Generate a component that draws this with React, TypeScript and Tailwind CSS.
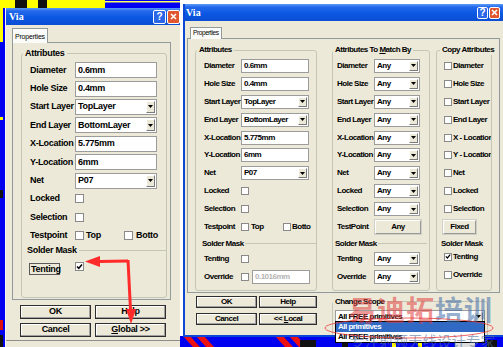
import React from "react";

const FONT = "font-['Liberation_Sans',Arial,sans-serif]";
const LT = "font-bold text-[9px] leading-[11px] tracking-[-0.3px] text-black whitespace-nowrap";
const RT = "font-bold text-[8px] leading-[10px] tracking-[-0.5px] text-black whitespace-nowrap";

function Check({ checked = false, s = "w-[9px] h-[9px]" }: { checked?: boolean; s?: string }) {
  return (
    <span className={`inline-flex shrink-0 items-center justify-center bg-white border border-[#8a8a8a] ${s}`}>
      {checked && (
        <svg width="7" height="7" viewBox="0 0 7 7">
          <path d="M1 3.4 L2.8 5.3 L6 1.4" stroke="#000" strokeWidth="1.5" fill="none" />
        </svg>
      )}
    </span>
  );
}

function TextBox({ v, w, h, t, disabled = false }: { v: string; w: string; h: string; t: string; disabled?: boolean }) {
  return (
    <div className={`flex items-center shrink-0 bg-white border border-[#9c9c9c] pl-[2px] overflow-hidden ${w} ${h}`}>
      <span className={`${t} ${disabled ? "!text-[#b4b4b4]" : ""}`}>{v}</span>
    </div>
  );
}

function Combo({ v, w, h, t }: { v: string; w: string; h: string; t: string }) {
  return (
    <div className={`flex items-stretch shrink-0 bg-white border border-[#9c9c9c] ${w} ${h}`}>
      <span className={`flex-1 flex items-center pl-[2px] overflow-hidden ${t}`}>{v}</span>
      <span className="w-[9px] m-[1px] flex items-center justify-center bg-[#ece9d8] border border-t-white border-l-white border-r-[#7a7a7a] border-b-[#7a7a7a]">
        <svg width="5" height="3" viewBox="0 0 5 3">
          <path d="M0 0H5L2.5 3Z" fill="#000" />
        </svg>
      </span>
    </div>
  );
}

function Btn({ children, cls, t }: { children: React.ReactNode; cls: string; t: string }) {
  return (
    <div className={`flex items-center justify-center bg-[#ece9d8] border border-[#2e2e2e] shadow-[inset_-1px_-1px_0_#a0a0a0,inset_1px_1px_0_#ffffff] ${cls}`}>
      <span className={t}>{children}</span>
    </div>
  );
}

function SoftBtn({ children, cls, t }: { children: React.ReactNode; cls: string; t: string }) {
  return (
    <div className={`flex items-center justify-center shrink-0 bg-[#ece9d8] border border-t-[#ffffff] border-l-[#ffffff] border-r-[#9a9a9a] border-b-[#9a9a9a] shadow-[0_0_0_1px_#cfcfc4] ${cls}`}>
      <span className={t}>{children}</span>
    </div>
  );
}

function TitleBar({ left }: { left: boolean }) {
  return (
    <div
      className={`flex items-center h-[17px] shrink-0 bg-[linear-gradient(to_bottom,#5a9cf8_0%,#2468ea_18%,#0b58e3_55%,#0a4ed3_100%)] ${
        left ? "pl-[3px] pr-0" : "pl-[1px] pr-[5px]"
      }`}
    >
      <span className="font-['Liberation_Serif',serif] font-bold text-[10px] text-white leading-none">Via</span>
      <div className="ml-auto flex gap-[1px]">
        <div
          className={`flex items-center justify-center rounded-[2px] border border-white bg-[#2a66e8] ${
            left ? "w-[13px] h-[14px]" : "w-[11px] h-[12px]"
          }`}
        >
          <span className="text-white font-bold text-[10px] leading-none">?</span>
        </div>
        <div
          className={`flex items-center justify-center rounded-[2px] border border-white bg-[#e0562e] ${
            left ? "w-[13px] h-[14px]" : "w-[11px] h-[12px]"
          }`}
        >
          <svg width="7" height="7" viewBox="0 0 7 7">
            <path d="M1 1L6 6M6 1L1 6" stroke="#fff" strokeWidth="1.6" />
          </svg>
        </div>
      </div>
    </div>
  );
}

function LRow({ label, children }: { label: string; children?: React.ReactNode }) {
  return (
    <div className="flex items-center h-[18.4px]">
      <span className={`w-[45px] shrink-0 ${LT}`}>{label}</span>
      {children}
    </div>
  );
}

function RRow({ label, lw, children }: { label: string; lw: string; children?: React.ReactNode }) {
  return (
    <div className="flex items-center h-[17.9px] overflow-hidden">
      <span className={`${lw} shrink-0 ${RT}`}>{label}</span>
      {children}
    </div>
  );
}

function CRow({ label, checked = false }: { label: string; checked?: boolean }) {
  return (
    <div className="flex items-center h-[17.9px] overflow-hidden">
      <Check checked={checked} s="w-[8px] h-[8px]" />
      <span className={`ml-[1px] ${RT}`}>{label}</span>
    </div>
  );
}

function LeftWindow() {
  const tb = (v: string) => <TextBox v={v} w="w-[82px]" h="h-[16px]" t={LT} />;
  const cb = (v: string) => <Combo v={v} w="w-[82px]" h="h-[16px]" t={LT} />;
  return (
    <div className="absolute left-[5px] top-[8px] w-[175px] h-[339px] flex flex-col bg-[#ece9d8] border-l border-[#f6f6f6] overflow-hidden">
      <TitleBar left />
      <div className="flex flex-col pl-[6px]">
        <div className="flex mt-[3px]">
          <div className="relative z-10 -mb-px h-[15px] px-[2px] flex items-center bg-[#fbfbf9] border border-b-0 border-[#919b9c] text-[7px] leading-none tracking-[-0.2px] text-black">
            Properties
          </div>
        </div>
        <div className="w-[159px] border border-[#919b9c] pb-[1px]">
          <fieldset className="ml-[8px] mr-[3px] mt-[5px] border border-[#c6c6b6] rounded-[3px] min-w-0">
            <legend className={`ml-[1px] px-[2px] ${LT}`}>Attributes</legend>
            <div className="flex flex-col pt-[2px] pl-[8px] pb-[22px]">
              <LRow label="Diameter">{tb("0.6mm")}</LRow>
              <LRow label="Hole Size">{tb("0.4mm")}</LRow>
              <LRow label="Start Layer">{cb("TopLayer")}</LRow>
              <LRow label="End Layer">{cb("BottomLayer")}</LRow>
              <LRow label="X-Location">{tb("5.775mm")}</LRow>
              <LRow label="Y-Location">{tb("6mm")}</LRow>
              <LRow label="Net">{cb("P07")}</LRow>
              <LRow label="Locked">
                <Check />
              </LRow>
              <LRow label="Selection">
                <Check />
              </LRow>
              <LRow label="Testpoint">
                <Check />
                <span className={`ml-[2px] w-[38px] ${LT}`}>Top</span>
                <Check />
                <span className={`ml-[3px] ${LT}`}>Botto</span>
              </LRow>
              <div className="flex items-center h-[12px] -ml-[3px]">
                <span className={LT}>Solder Mask</span>
                <span className="flex-1 ml-[2px] border-t border-[#c6c6b6]" />
              </div>
              <div className="flex items-center h-[16px] mt-[2px]">
                <div className="w-[45px] shrink-0">
                  <span className={`-ml-[1px] inline-flex items-center h-[12px] w-[31px] px-[1px] border border-[#5a5a5a] ${LT}`}>
                    Tenting
                  </span>
                </div>
                <Check checked />
              </div>
            </div>
          </fieldset>
        </div>
        <div className="grid grid-cols-[71px_71px] gap-x-[4px] gap-y-[4px] mt-[5px] pl-[8px]">
          <Btn cls="h-[14px]" t={LT}>OK</Btn>
          <Btn cls="h-[14px]" t={LT}>Help</Btn>
          <Btn cls="h-[14px]" t={LT}>Cancel</Btn>
          <Btn cls="h-[14px]" t={LT}>
            <span className="underline">G</span>lobal &gt;&gt;
          </Btn>
        </div>
      </div>
      <div className="mt-auto mb-[6px] border-t border-[#8e8e8e]" />
    </div>
  );
}

function RightWindow() {
  const tb = (v: string) => <TextBox v={v} w="w-[68px]" h="h-[14px]" t={RT} />;
  const cb = (v: string) => <Combo v={v} w="w-[68px]" h="h-[14px]" t={RT} />;
  const any = () => <Combo v="Any" w="w-[46px]" h="h-[14px]" t={RT} />;
  return (
    <div className="absolute left-[183px] top-[4px] w-[322px] h-[333px] flex flex-col bg-[#ece9d8] border-l-2 border-b-2 border-[#0b48d6] overflow-hidden">
      <TitleBar left={false} />
      <div className="flex flex-col pl-[2px]">
        <div className="flex mt-[6px] ml-[3px]">
          <div className="relative z-10 -mb-px h-[12px] px-[2px] flex items-center bg-[#fbfbf9] border border-b-0 border-[#919b9c] text-[6.5px] leading-none tracking-[-0.4px] text-black">
            Properties
          </div>
        </div>
        <div className="w-[313px] border border-[#919b9c] pb-[1px] flex items-stretch">
          {/* Attributes */}
          <fieldset className="ml-[7px] mt-[6px] w-[122px] border border-[#c6c6b6] rounded-[3px] min-w-0">
            <legend className={`ml-[1px] px-[2px] ${RT}`}>Attributes</legend>
            <div className="flex flex-col pt-[2px] pl-[8px] pb-[5px]">
              <RRow label="Diameter" lw="w-[37px]">{tb("0.6mm")}</RRow>
              <RRow label="Hole Size" lw="w-[37px]">{tb("0.4mm")}</RRow>
              <RRow label="Start Layer" lw="w-[37px]">{cb("TopLayer")}</RRow>
              <RRow label="End Layer" lw="w-[37px]">{cb("BottomLayer")}</RRow>
              <RRow label="X-Location" lw="w-[37px]">{tb("5.775mm")}</RRow>
              <RRow label="Y-Location" lw="w-[37px]">{tb("6mm")}</RRow>
              <RRow label="Net" lw="w-[37px]">{cb("P07")}</RRow>
              <RRow label="Locked" lw="w-[37px]">
                <Check s="w-[8px] h-[8px]" />
              </RRow>
              <RRow label="Selection" lw="w-[37px]">
                <Check s="w-[8px] h-[8px]" />
              </RRow>
              <RRow label="Testpoint" lw="w-[37px]">
                <Check s="w-[8px] h-[8px]" />
                <span className={`ml-[2px] w-[32px] ${RT}`}>Top</span>
                <Check s="w-[8px] h-[8px]" />
                <span className={`ml-[1px] ${RT}`}>Botto</span>
              </RRow>
              <div className="flex items-center h-[12px] mt-[2px] -ml-[2px]">
                <span className={RT}>Solder Mask</span>
                <span className="flex-1 ml-[1px] border-t border-[#c6c6b6]" />
              </div>
              <div className="flex items-center h-[16px] mt-[1px]">
                <span className={`w-[37px] shrink-0 ${RT}`}>Tenting</span>
                <Check s="w-[8px] h-[8px]" />
              </div>
              <div className="flex items-center h-[16px] mt-[2px]">
                <span className={`w-[37px] shrink-0 ${RT}`}>Override</span>
                <Check s="w-[8px] h-[8px]" />
                <div className="ml-[3px]">
                  <TextBox v="0.1016mm" w="w-[58px]" h="h-[14px]" t={RT} disabled />
                </div>
              </div>
            </div>
          </fieldset>
          {/* Attributes To Match By */}
          <fieldset className="ml-[15px] mt-[6px] w-[98px] border border-[#c6c6b6] rounded-[3px] min-w-0">
            <legend className={`px-[2px] ${RT}`}>
              Attributes To <span className="underline">M</span>atch By
            </legend>
            <div className="flex flex-col pt-[2px] pl-[4px] pb-[5px]">
              <RRow label="Diameter" lw="w-[37px]">{any()}</RRow>
              <RRow label="Hole Size" lw="w-[37px]">{any()}</RRow>
              <RRow label="Start Layer" lw="w-[37px]">{any()}</RRow>
              <RRow label="End Layer" lw="w-[37px]">{any()}</RRow>
              <RRow label="X-Location" lw="w-[37px]">{any()}</RRow>
              <RRow label="Y-Location" lw="w-[37px]">{any()}</RRow>
              <RRow label="Net" lw="w-[37px]">{any()}</RRow>
              <RRow label="Locked" lw="w-[37px]">{any()}</RRow>
              <RRow label="Selection" lw="w-[37px]">{any()}</RRow>
              <RRow label="TestPoint" lw="w-[37px]">
                <SoftBtn cls="ml-[1px] w-[46px] h-[14px]" t={RT}>
                  Any
                </SoftBtn>
              </RRow>
              <div className="flex items-center h-[12px] mt-[2px] -ml-[2px] mr-[2px]">
                <span className={RT}>Solder Mask</span>
                <span className="flex-1 ml-[1px] border-t border-[#c6c6b6]" />
              </div>
              <div className="flex items-center h-[16px] mt-[1px]">
                <span className={`w-[37px] shrink-0 ${RT}`}>Tenting</span>
                {any()}
              </div>
              <div className="flex items-center h-[16px] mt-[2px]">
                <span className={`w-[37px] shrink-0 ${RT}`}>Override</span>
                {any()}
              </div>
            </div>
          </fieldset>
          {/* Copy Attributes */}
          <fieldset className="ml-[6px] mt-[6px] w-[56px] border border-[#c6c6b6] rounded-[3px] min-w-0">
            <legend className={`ml-[3px] px-[2px] ${RT}`}>Copy Attributes</legend>
            <div className="flex flex-col pt-[2px] pl-[7px] pb-[5px]">
              <CRow label="Diameter" />
              <CRow label="Hole Size" />
              <CRow label="Start Layer" />
              <CRow label="End Layer" />
              <CRow label="X - Location" />
              <CRow label="Y - Location" />
              <CRow label="Net" />
              <CRow label="Locked" />
              <CRow label="Selection" />
              <div className="flex items-center h-[17.9px]">
                <SoftBtn cls="-ml-[1px] w-[33px] h-[14px]" t={RT}>
                  Fixed
                </SoftBtn>
              </div>
              <div className="flex items-center h-[12px] mt-[2px] -ml-[3px] overflow-hidden">
                <span className={RT}>Solder Mask</span>
              </div>
              <div className="flex items-center h-[16px] -mt-[1px] overflow-hidden">
                <Check checked s="w-[8px] h-[8px]" />
                <span className={`ml-[1px] ${RT}`}>Tenting</span>
              </div>
              <div className="flex items-center h-[16px] mt-[2px] overflow-hidden">
                <Check s="w-[8px] h-[8px]" />
                <span className={`ml-[1px] ${RT}`}>Override</span>
              </div>
            </div>
          </fieldset>
        </div>
        <div className="flex items-start mt-[3px]">
          <div className="grid grid-cols-[61px_58px] gap-x-[2px] gap-y-[5px] ml-[9px]">
            <Btn cls="h-[12px]" t={RT}>OK</Btn>
            <Btn cls="h-[12px]" t={RT}>Help</Btn>
            <Btn cls="h-[12px]" t={RT}>Cancel</Btn>
            <Btn cls="h-[12px]" t={RT}>
              &lt;&lt; <span className="underline">L</span>ocal
            </Btn>
          </div>
          <fieldset className="ml-[15px] mt-[1px] w-[156px] border border-[#c6c6b6] rounded-[3px] min-w-0">
            <legend className={`px-[2px] ${RT}`}>Change Scope</legend>
            <div className="pt-[3px] pl-[2px] pb-[20px]">
              <Combo v="All FREE primitives" w="w-[150px]" h="h-[14px]" t={RT} />
            </div>
          </fieldset>
        </div>
      </div>
    </div>
  );
}

function Pcb() {
  return (
    <svg className="absolute left-0 top-0" width="503" height="347" viewBox="0 0 503 347">
      <rect x="0" y="0" width="6" height="347" fill="#0000f0" />
      <rect x="0" y="0" width="3" height="42" fill="#ffff00" />
      <rect x="0" y="0" width="105" height="8" fill="#ffff00" />
      <rect x="105" y="0" width="75" height="8" fill="#0000f0" />
      <rect x="105" y="1" width="75" height="1.5" fill="#ffff66" />
      <rect x="15" y="0" width="12" height="8" fill="#111111" />
      <rect x="38" y="0" width="9" height="8" fill="#111111" />
      <rect x="0" y="117" width="3" height="3" fill="#ffff00" />
      <rect x="0" y="190" width="3" height="8" fill="#111111" />
      <rect x="0" y="320" width="3" height="10" fill="#dd1010" />
      <rect x="0" y="335" width="3" height="12" fill="#111111" />
      <rect x="180" y="336" width="323" height="11" fill="#0000f0" />
      <polygon points="183,336 190,336 200,347 193,347" fill="#ee1111" />
      <polygon points="196,336 204,336 214,347 206,347" fill="#ee1111" />
      <polygon points="275,336 283,336 293,347 285,347" fill="#ee1111" />
      <polygon points="289,336 297,336 307,347 299,347" fill="#ee1111" />
      <rect x="300" y="340" width="16" height="7" fill="#111111" />
      <rect x="342" y="341" width="6" height="6" fill="#111111" />
      <rect x="392" y="341" width="4" height="6" fill="#ffff00" />
      <rect x="418" y="341" width="4" height="6" fill="#ffff00" />
      <rect x="455" y="340" width="20" height="7" fill="#dcdcdc" />
      <rect x="487" y="340" width="10" height="7" fill="#111111" />
    </svg>
  );
}

function Dropdown() {
  return (
    <div className="absolute left-[335px] top-[321px] w-[150px] flex flex-col bg-white border border-black">
      <div className={`h-[10px] flex items-center pl-[2px] bg-[#316ac5] ${RT} !text-white`}>All primitives</div>
      <div className={`h-[10px] flex items-center pl-[2px] ${RT}`}>All FREE primitives</div>
    </div>
  );
}

function Overlay() {
  return (
    <>
      <div className="absolute left-[348px] top-[293px] flex font-['Noto_Sans_CJK_SC',sans-serif] font-bold text-[28px] leading-[32px] tracking-[1px] pointer-events-none">
        <span className="text-[#e23c3c]/55">易迪拓</span>
        <span className="text-[#3d6aa8]/55">培训</span>
      </div>
      <div className="absolute left-[350px] top-[332px] font-['Noto_Sans_CJK_SC',sans-serif] text-[14.5px] leading-[18px] text-[#52729c]/60 whitespace-nowrap pointer-events-none">
        专注射频天线设计专家
      </div>
      <svg className="absolute left-0 top-0 pointer-events-none" width="503" height="347" viewBox="0 0 503 347">
        <ellipse cx="409" cy="328" rx="84" ry="10" fill="none" stroke="#e83030" strokeOpacity="0.75" strokeWidth="1" />
        {/* horizontal arrow to checkbox */}
        <polygon points="128,259.5 128,262.5 99,263 99,260" fill="#ff2b2b" />
        <polygon points="85,261.5 100,256 100,267" fill="#ff2b2b" />
        {/* vertical arrow to Global button */}
        <polygon points="126.5,260 129.5,260 132,310 129,310" fill="#ff2b2b" />
        <polygon points="131,324 126,309 136,309" fill="#ff2b2b" />
      </svg>
    </>
  );
}

export default function App() {
  return (
    <div className={`relative w-[503px] h-[347px] overflow-hidden bg-white ${FONT}`}>
      <Pcb />
      <LeftWindow />
      <RightWindow />
      <Dropdown />
      <Overlay />
    </div>
  );
}
